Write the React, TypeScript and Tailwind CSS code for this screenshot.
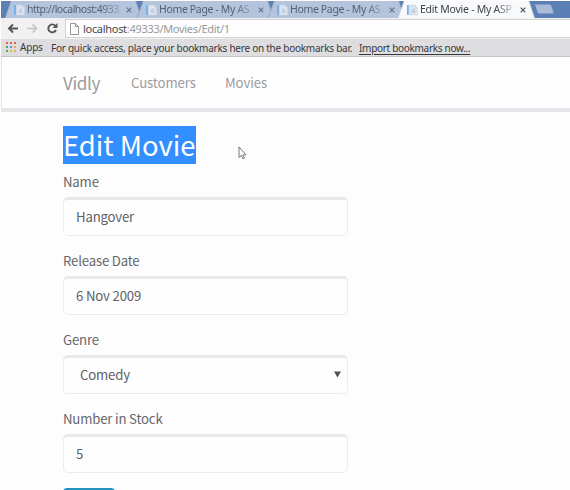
import type { ReactNode } from "react";

function FileIcon() {
  return (
    <svg width="12" height="12" viewBox="0 0 12 12" className="shrink-0">
      <rect x="0" y="1" width="1.800" height="10" fill="#6fb2e8" />
      <path d="M2.500 1H8l2.500 3v7h-8z" fill="#dce3ef" stroke="#c9d2e1" strokeWidth="0.600" />
      <path d="M5 9l1-4 2 1-2 2h3" stroke="#b4bfd1" strokeWidth="0.800" fill="none" />
    </svg>
  );
}

type TabProps = { title: string; width: string; active?: boolean; spacing: string };

function Tab({ title, width, active, spacing }: TabProps) {
  return (
    <div className={`relative flex h-[17px] shrink-0 items-center pl-[11px] ${width}`}>
      <svg className="absolute left-0 top-0" width="140" height="17" viewBox="0 0 140 17">
        <path d="M2 17L8 0H133L138.500 17z" fill={active ? "#f8f9fa" : "#b4c4dc"} />
        <path d="M2 17L8 .5M133 .5L138.500 17" stroke={active ? "#c5cedc" : "#8d9fbc"} strokeWidth="0.800" fill="none" />
      </svg>
      <div className="relative flex items-center">
        <FileIcon />
        <span
          className={`ml-px w-[99px] whitespace-nowrap text-[10.500px] leading-[15px] ${spacing} ${active ? "text-[#3e434b]" : "text-[#566175]"} [mask-image:linear-gradient(to_right,black_76%,transparent_100%)]`}
        >
          {title}
        </span>
        <svg width="6" height="6" viewBox="0 0 6 6" className={active ? "ml-[1px]" : ""}>
          <path d="M.7.7l4.600 4.600M5.300.7L.7 5.300" stroke={active ? "#4c535e" : "#66738a"} strokeWidth="1.200" />
        </svg>
      </div>
    </div>
  );
}

function TabStrip() {
  return (
    <div className="flex h-[17px] overflow-hidden bg-[#5c80b6] pl-[2px]">
      <Tab width="w-[132px]" spacing="tracking-[-0.5px]" title="http://localhost:4933" />
      <Tab width="w-[131px]" spacing="tracking-[-0.35px]" title="Home Page - My AS" />
      <Tab width="w-[130px]" spacing="tracking-[-0.35px]" title="Home Page - My AS" />
      <Tab width="w-[136px]" spacing="tracking-[-0.25px]" title="Edit Movie - My ASP" active />
      <svg width="24" height="17" viewBox="0 0 24 17" className="shrink-0">
        <path d="M3 3.500h14q2 0 2.500 2l2 6q0 1-1 1H7.500q-1.500 0-2-1.500z" fill="#a9bbd6" />
      </svg>
    </div>
  );
}

function Toolbar() {
  return (
    <div className="flex h-[21px] items-center bg-[#f1f1f2] pl-[6px]">
      <svg width="58" height="21" viewBox="0 0 58 21" className="shrink-0">
        <path d="M11 10.500H2.500M6 6.500l-4 4 4 4" stroke="#555" strokeWidth="1.900" fill="none" />
        <path d="M20 10.500h9M25.500 6.500l4 4-4 4" stroke="#c5c5c7" strokeWidth="1.700" fill="none" />
        <path d="M48.300 7.700A4 4 0 1 0 49 12" stroke="#555" strokeWidth="1.900" fill="none" />
        <path d="M50.500 5v5h-5z" fill="#555" />
      </svg>
      <div className="flex h-[19px] flex-1 items-center border border-r-0 border-[#d3d3d5] bg-[#fefefe] pl-[4px]">
        <svg width="9" height="12" viewBox="0 0 9 12">
          <path d="M.5.5H5.500L8.500 3.500V11.500H.5zM5.500.5V3.500H8.500" stroke="#8b8b8e" fill="none" strokeWidth="0.900" />
        </svg>
        <span className="-mt-px ml-[4px] whitespace-nowrap text-[11px] leading-[17px] tracking-[-0.300px] text-[#999a9d]">
          <span className="text-[#48494c]">localhost</span>:49333/Movies/Edit/1
        </span>
      </div>
    </div>
  );
}

const appDots = [
  "bg-[#e0604f]", "bg-[#e0604f]", "bg-[#e0604f]",
  "bg-[#57a868]", "bg-[#5b8ddb]", "bg-[#e3b347]",
  "bg-[#57a868]", "bg-[#e3b347]", "bg-[#e3b347]",
];

function BookmarksBar() {
  return (
    <div className="flex h-[18px] items-center border-b border-[#c6c6c9] bg-[#dedee0] pl-[5px] text-[10px] leading-[16px] text-[#37383b]">
      <div className="-mt-[2px] grid grid-cols-3 gap-x-[2px] gap-y-[2px]">
        {appDots.map((color, i) => (
          <span key={i} className={`size-[2px] ${color}`} />
        ))}
      </div>
      <span className="-mt-[2px] ml-[4px] w-[31px] whitespace-nowrap tracking-[-0.200px]">Apps</span>
      <span className="w-[308px] whitespace-nowrap tracking-[-0.250px]">
        For quick access, place your bookmarks here on the bookmarks bar.
      </span>
      <span className="whitespace-nowrap tracking-[-0.300px] underline underline-offset-2">Import bookmarks now...</span>
    </div>
  );
}

function Field({ label, children }: { label: string; children: ReactNode }) {
  return (
    <div className="h-[79px]">
      <div className="h-[24px] text-[13.200px] leading-[18px] tracking-[-0.180px] text-[#66676b]">{label}</div>
      <div className="flex h-[39px] w-[285px] items-center rounded-[5px] border border-t-[3px] border-[#ececef] border-t-[#e8e8ea] bg-[#fffeff] pb-[2px] pl-[12px] pr-[6px] text-[13.200px] leading-[18px] tracking-[-0.180px] text-[#606165]">
        {children}
      </div>
    </div>
  );
}

function Pointer() {
  return (
    <svg className="ml-[42px] mt-[8px]" width="9" height="14" viewBox="0 0 9 14">
      <path d="M1 1v10.500l2.300-2.200 1.600 3.500 1.500-.7-1.500-3.300H8z" fill="#fff" stroke="#66666b" strokeWidth="0.900" />
    </svg>
  );
}

export default function App() {
  return (
    <div className="h-[490px] w-[570px] overflow-hidden bg-[#fefdfe] pl-px pt-px font-['Noto_Sans','Open_Sans',sans-serif]">
      <TabStrip />
      <Toolbar />
      <BookmarksBar />
      <div className="font-['Noto_Sans_CJK_SC','Noto_Sans',sans-serif]">
        <nav className="flex h-[55px] items-center border-b-4 border-l border-b-[#e5e6e9] border-l-[#e5e6e9] bg-[#fffeff] pl-[61px] text-[13.200px] leading-[20px] tracking-[-0.100px] text-[#9b9b9e]">
          <span className="w-[68px] text-[17.200px] tracking-[-0.400px]">Vidly</span>
          <span className="w-[94px]">Customers</span>
          <span>Movies</span>
        </nav>
        <main className="pl-[62px] pt-[14px]">
          <div className="flex h-[47px]">
            <h1 className="h-[38px] w-[133px] whitespace-nowrap bg-[#338fff] text-[27.400px] leading-[36px] text-white">
              Edit Movie
            </h1>
            <div className="pt-[12px]"><Pointer /></div>
          </div>
          <Field label="Name">Hangover</Field>
          <Field label="Release Date">6 Nov 2009</Field>
          <Field label="Genre">
            <span className="ml-[4px] flex-1">Comedy</span>
            <svg width="7" height="7" viewBox="0 0 7 7">
              <path d="M0 .5h7L3.500 6.500z" fill="#505155" />
            </svg>
          </Field>
          <Field label="Number in Stock">5</Field>
          <div className="-mt-px h-[30px] w-[52px] rounded-[4px] bg-[#2492bd]" />
        </main>
      </div>
    </div>
  );
}
